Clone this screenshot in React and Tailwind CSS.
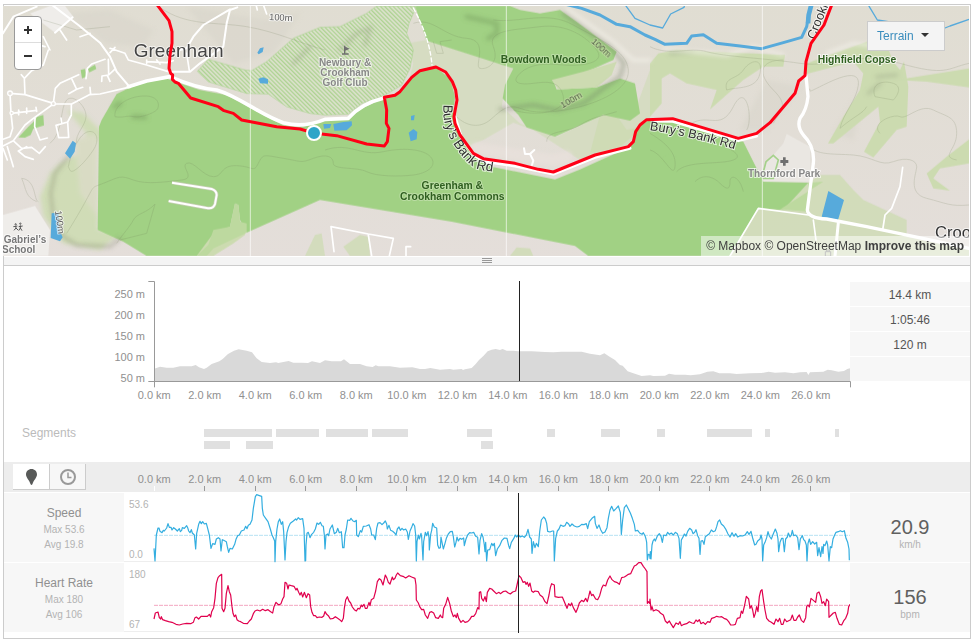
import React from "react";

// Plot samples are grouped by section; each section has its own x origin.
const joinSections = (...sections) =>
  sections
    .map(([origin, text]) =>
      text
        .trim()
        .split(/\s+/)
        .map((pair) => {
          const [x, y] = pair.split(",").map(Number);
          return `${x + origin},${y}`;
        })
        .join(" ")
    )
    .join(" ");

const SPEED = joinSections(
  [0, `462,280 465,318 466,300 469,240 474,219 477,219 480,229 486,233 490,226 493,228 500,219 504,206 508,217 513,217 516,225 521,218 526,222 532,228 538,221 541,230 545,226 547,218 553,220 560,212 563,218 566,228 570,233 574,224 577,234 583,240 587,282 590,235 596,208 600,199 604,206 608,200 613,207 619,205 623,220 628,240 633,280 638,266 645,268 649,252 655,248 660,252 663,288 667,254 671,256 679,260 682,275 686,292 690,280 697,282 704,268 708,253 713,242 718,240 724,228 732,225 737,214 741,221 745,211 750,208 756,195 760,160 766,125 770,119 776,121 785,124 787,160 790,180 797,190 804,200 811,222 816,240 820,248 824,258 825,320 827,260 831,222 835,200 839,192 844,208 848,200 851,230 855,315 858,260 861,233 866,215 871,205 880,198 887,192 890,195 895,188 900,193 908,191 912,220 915,318 917,317 918,270 921,235 925,232 930,248 935,238 941,232 946,222 951,204 956,208 961,202 966,212 970,214 973,240`],
  [975, `0,282 3,240 8,237 11,242 15,222 22,210 28,236 34,232 38,220 43,233 49,230 53,278 57,278 60,240 64,222 68,195 74,196 78,190 84,198 89,200 94,196 95,240 100,245 106,227 110,231 115,214 124,213 132,209 137,222 140,240 146,240 151,254 155,220 159,204 165,203 171,209 176,204 181,198 185,207 187,222 192,211 197,226 203,229 208,233 213,240 217,222 222,216 226,226 231,220 236,225 242,222 247,231 250,253 255,228 260,217 264,206 269,213 272,240 274,318 276,260 280,240 283,252 288,235 290,245 294,315 296,260 301,232 305,242 309,230 312,248 313,285 317,238 320,226 323,205 328,216 335,219 338,270 342,280 346,278 348,246 351,262 355,282 360,265 364,250 370,237 376,230 382,229 385,245 389,276 393,262 396,246 400,258 405,250 410,253 416,249 418,272 423,252 428,240 434,233 440,234 446,232 452,244 458,247 462,297 465,256 470,236 474,246 478,270 480,290 482,262 485,318 488,285 494,284 500,265 504,272 508,265 512,302 517,282 524,272 531,256 538,249 546,250 551,272 554,281 559,262 566,251 571,240 575,246 580,240 586,246 592,243 598,247 604,240 609,223 614,246 619,252 621,295 625,260 630,278 634,265 640,275 644,230 649,195 656,186 661,192 665,205 668,229 675,231 682,228 686,228 688,318 692,250 697,228 702,222 707,210 714,214 720,212 725,202 731,207 735,214 741,207 748,213 756,216 763,214 770,208 777,209 784,206 788,221 793,200 801,190 809,184 811,205 816,220 822,210 827,224 833,235 840,231 846,218 850,190 855,165 860,154 866,168 873,161 880,153 884,166 886,172 889,238 893,195 898,158 904,150 909,160 916,174 922,190 928,208 931,228 938,226 944,234 951,238 955,233 960,242 963,252 965,262 967,315 970,298 974,300`],
  [1950, `0,310 1,290 3,312 6,270 9,258 13,252 16,258 22,243 28,236 33,244 37,262 41,240 48,242 53,232 58,238 64,234 70,240 76,232 82,236 87,250 91,310 94,255 98,248 103,237 108,243 113,229 119,220 125,225 129,236 134,232 138,224 143,242 147,250 150,298 153,258 158,257 162,268 166,245 172,241 178,236 184,225 190,230 196,227 200,215 204,200 209,195 214,207 221,213 228,224 234,237 240,246 246,233 252,244 257,236 263,246 270,242 278,243 286,239 292,230 297,238 303,229 308,249 314,270 318,268 323,258 330,252 333,240 336,252 338,318 341,270 345,262 350,248 354,230 358,243 364,252 370,236 376,222 381,235 384,252 386,290 390,262 395,250 399,250 403,290 407,252 412,246 415,234 420,246 424,240 427,226 431,242 437,240 443,248 447,284 451,252 457,242 461,254 465,258 469,270 471,318 474,265 478,252 482,268 488,260 494,267 500,262 503,302 507,278 512,305 516,275 519,295 521,268 525,272 530,258 533,270 537,318 541,275 545,278 549,252 554,240 558,232 565,230 571,227 577,230 583,227 588,250 593,262 597,282 598,316`]
);

const HEART = joinSections(
  [0, `462,492 466,474 474,471 478,488 482,492 484,485 488,494 496,497 506,500 516,502 528,508 538,510 548,507 560,505 572,506 580,502 585,488 589,486 596,492 603,484 612,484 622,484 628,478 632,486 635,470 641,458 645,430 649,385 654,368 659,362 665,358 666,460 671,470 675,460 679,415 684,392 688,410 692,420 696,455 699,475 703,485 707,480 711,494 716,498 722,500 730,505 742,506 748,498 754,492 760,476 765,468 772,465 780,468 788,463 796,467 804,464 812,470 818,474 822,455 828,442 836,450 843,446 848,432 852,425 855,382 860,385 864,402 867,390 874,392 882,394 888,405 891,400 896,412 900,420 904,412 908,426 913,412 919,428 924,416 929,420 932,455 936,472 941,482 946,482 951,488 958,486 966,487 971,483`],
  [975, `0,470 5,478 10,482 16,492 25,490 31,485 38,490 44,494 50,500 55,490 58,460 62,435 67,425 72,438 77,444 82,456 88,464 94,468 99,460 104,462 109,450 112,455 117,448 121,460 126,460 132,442 135,452 139,434 146,430 152,408 157,380 163,371 168,375 174,390 181,360 186,370 190,382 195,387 202,366 205,374 210,370 214,360 218,354 226,362 234,364 242,369 252,362 260,366 270,370 273,390 274,435 280,444 284,455 290,464 296,463 301,480 308,490 314,472 320,470 326,474 332,488 340,490 346,480 349,486 353,488 356,460 362,448 368,427 374,446 379,468 385,485 390,480 394,488 397,475 401,490 408,502 414,496 420,502 428,500 434,494 440,484 446,484 452,476 458,458 462,462 463,412 467,410 470,430 475,438 480,425 484,440 487,412 494,400 500,402 506,408 514,416 522,412 526,416 534,410 542,408 550,414 556,417 563,411 572,408 576,390 582,362 588,368 594,382 600,380 603,388 607,382 611,394 615,384 620,408 625,412 630,408 640,410 645,420 653,426 660,440 666,446 672,420 676,398 680,386 688,390 690,425 700,427 712,426 718,440 726,460 731,446 736,452 740,444 745,458 753,472 758,460 763,444 770,436 776,440 782,430 787,440 791,425 795,408 800,422 804,418 812,432 818,434 824,422 830,400 835,390 842,393 848,375 855,363 861,374 868,380 875,382 883,388 890,368 898,366 904,362 910,358 917,356 922,345 928,333 934,330 941,323 948,323 955,334 961,342 966,350 967,445 970,440 974,445`],
  [1950, `0,432 3,465 6,455 10,468 18,464 26,468 32,475 40,480 46,498 52,504 58,498 62,505 70,518 78,504 85,508 90,500 94,512 102,508 110,506 118,500 126,504 132,505 138,495 143,500 148,494 153,506 160,502 166,508 173,500 180,502 185,490 192,488 200,484 208,486 215,485 222,490 230,493 236,500 242,510 250,510 256,508 262,490 270,488 274,468 278,475 284,450 289,424 296,432 300,460 304,452 308,465 312,487 316,475 320,455 324,470 328,425 332,408 336,404 341,440 345,465 350,490 357,498 364,502 372,508 378,492 384,500 389,490 394,508 399,508 404,492 410,500 416,497 422,494 427,480 432,496 438,496 443,486 448,480 454,496 461,502 467,488 470,455 474,450 478,456 483,430 490,436 497,442 501,415 507,411 512,425 516,445 521,440 526,452 530,432 536,440 537,487 544,480 550,474 556,472 561,490 568,508 575,510 582,496 587,490 593,475 596,455 600,448`]
);

const ELEVATION = joinSections(
  [0, `463,356 480,350 500,353 520,353 540,349 575,349 587,345 597,352 612,357 620,353 635,342 658,334 668,327 684,312 702,302 716,298 740,302 756,307 770,325 785,336 810,339 828,337 835,339 850,336 866,333 880,338 905,338 924,339 936,334 960,339`],
  [975, `0,331 20,334 48,334 57,328 75,342 105,342 125,349 143,351 152,346 160,349 195,349 225,353 262,352 285,357 300,357 316,354 345,359 375,357 385,359 410,357 414,360 420,358 440,354 452,342 462,330 475,318 488,304 500,299 512,297 525,300 533,297 545,302 565,302 580,304 620,304 660,306 685,307 710,305 770,305 795,311 825,316 838,310 855,321 870,330 885,345 893,347 908,364 925,370 950,378`],
  [1950, `0,376 10,378 45,377 57,371 75,374 105,374 122,376 150,373 172,365 190,364 208,370 240,370 260,372 300,370 335,369 356,365 375,368 405,367 430,370 450,367 470,366 475,375 480,367 520,365 533,359 545,361 565,365 582,363 592,357 600,355`]
);

const SEGMENTS = [
  [204, 68, 0], [276, 43, 0], [326, 42, 0], [372, 36, 0], [467, 25, 0], [547, 8, 0],
  [601, 19, 0], [657, 8, 0], [707, 45, 0], [765, 5, 0], [835, 4, 0],
  [204, 26, 12], [246, 27, 12], [481, 12, 12],
];

const KM = [0, 2, 4, 6, 8, 10, 12, 14, 16, 18, 20, 22, 24, 26];

function Label({ x, y, size = 30, fill = "#888", halo = "#ffffffaa", bold = true, children, ...rest }) {
  return (
    <text x={x} y={y} fontSize={size} fill={fill} fontWeight={bold ? 700 : 400} stroke={halo} strokeWidth="6" strokeLinejoin="round" paintOrder="stroke" textAnchor="middle" {...rest}>
      {children}
    </text>
  );
}

const ROUTE =
  "M468,10 L507,62 L516,95 L516,130 L510,165 L507,205 L512,220 L518,225 L517,238 L525,246 L535,250 L572,294 L655,320 L672,332 L700,340 L725,360 L830,380 L900,387 L945,400 L1010,407 L1100,432 L1153,438 L1162,425 L1167,385 L1159,370 L1160,330 L1153,292 L1185,286 L1200,275 L1235,232 L1260,212 L1308,201 L1337,216 L1357,245 L1367,270 L1371,300 L1362,350 L1365,370 L1380,405 L1420,460 L1450,476 L1545,490 L1615,508 L1660,516 L1785,465 L1885,440 L1900,425 L1907,395 L1920,375 L1940,359 L2018,356 L2215,415 L2270,400 L2310,368 L2385,280 L2396,243 L2415,227 L2418,185 L2433,130 L2472,75 L2497,10";

const TOWN_ROADS =
  "M9,438 L40,422 L75,375 L100,355 L160,312 L215,312 L268,284 L300,282 L385,262 M30,280 L75,284 L160,310 M30,280 L33,340 L38,385 L30,410 L9,418 M75,284 L73,235 L95,212 L130,195 L145,150 M73,235 L64,224 M160,310 L166,265 L180,250 L236,224 M216,238 L230,268 L206,281 M230,268 L248,262 M258,236 L262,205 L275,192 L315,178 M325,178 L326,225 L344,208 M326,225 L306,228 L305,244 M322,226 L330,244 M272,284 L270,262 M105,355 L104,380 L120,420 L142,414 M214,312 L214,345 L203,366 L206,412 L176,413 L168,376 L203,366 M185,370 L183,354 M35,340 L110,331 M56,330 L56,344 M80,324 L80,340 M108,322 L110,334 M42,424 L65,445 L95,442 L118,460 L136,440 M80,440 L55,453 L75,470 L100,478 M9,445 L22,480 M22,440 L40,500";

function TerrainMap() {
  return (
    <svg className="block h-full w-full" viewBox="9 18 2898 750" preserveAspectRatio="xMidYMid slice" fontFamily="'Liberation Sans', Arial, sans-serif" role="img" aria-label="Route map of Greenham and Crookham Commons">
      <defs>
        <linearGradient id="land" x1="0" y1="0" x2="0" y2="1">
          <stop offset="0" stopColor="#e0ddd2" />
          <stop offset="1" stopColor="#e4deda" />
        </linearGradient>
        <pattern id="hatch" width="9" height="9" patternUnits="userSpaceOnUse" patternTransform="rotate(-45)">
          <rect width="9" height="9" fill="#dbe1cb" />
          <rect width="3" height="9" fill="#a3d085" />
        </pattern>
        <filter id="shade" x="-30%" y="-30%" width="160%" height="160%">
          <feGaussianBlur stdDeviation="7" />
        </filter>
        <path id="bury-west" d="M1331,314 C1326,368 1343,413 1383,464 S1438,507 1495,518" />
        <path id="bury-east" d="M1949,390 Q2060,405 2225,454" />
        <path id="crook" d="M2444,120 L2512,-50" />
      </defs>
      <rect x="0" y="0" width="2925" height="790" fill="url(#land)" />

      {/* built-up areas and soft relief */}
      <g filter="url(#shade)">
        <path fill="#d8d3ca" opacity=".5" d="M200,40 L330,30 L460,90 L430,140 L320,130 Z M560,20 L800,60 L900,40 L820,160 L700,190 Z M2300,240 L2400,260 L2300,390 L2220,390 Z M2600,240 L2500,400 L2560,420 Z" />
        <path fill="#cddcb3" opacity=".9" d="M180,490 L150,520 L120,590 L130,650 L190,730 L300,750 L360,700 L293,690 L290,430 L310,400 L250,340 L200,330 L260,400 L240,460 Z" />
        <path fill="#d9dbc4" d="M225,420 L290,400 L293,650 L240,580 Z" />
      </g>
      <path fill="#efedea" d="M90,40 L150,18 L195,18 L220,50 L165,98 Z M9,645 L105,618 L150,690 L145,768 L9,768 Z" />
      <path fill="#eae7e2" d="M2290,500 L2350,430 L2360,402 L2430,440 L2432,545 L2290,547 Z" />

      {/* pale woodland */}
      <g fill="#d6dcc2">
        <path d="M1220,130 L1280,120 L1540,205 L1515,260 L1505,320 L1560,370 L1670,410 L1810,345 L1900,345 L1950,210 L1950,358 L1905,390 L1890,435 L1740,480 L1600,390 L1540,368 L1450,420 L1400,440 L1368,380 L1371,300 L1340,220 L1308,200 L1260,212 L1225,250 L1240,190 Z" />
      </g>
      <g fill="#ccdbb0">
        <path d="M1950,190 L1975,160 L2030,148 L2130,155 L2260,160 L2355,165 L2350,200 L2290,200 L2230,240 L2130,328 L2150,270 L2060,250 L2010,220 L1985,235 L1985,310 L1950,350 Z" />
        <path d="M2420,190 L2500,160 L2600,125 L2660,135 L2680,185 L2700,210 L2712,185 L2725,260 L2720,380 L2690,390 L2620,472 L2592,455 L2640,365 L2635,320 L2500,430 L2484,430 L2530,350 L2580,270 L2590,220 L2560,185 L2420,222 Z" />
        <path d="M2690,240 L2907,205 L2907,262 L2780,245 Z M2907,418 L2840,470 L2780,520 L2800,565 L2850,572 L2800,535 L2820,505 L2907,490 Z" />
        <path d="M2425,548 L2460,525 L2520,525 L2560,570 L2590,600 L2720,660 L2720,710 L2907,750 L2907,768 L2160,768 L2280,625 L2340,625 Z" opacity=".75" />
        <path d="M1050,768 L1030,740 L1080,705 L1105,710 L1110,768 Z M1530,768 L1550,742 L1590,745 L1600,768 Z M1800,345 L1845,340 L1880,390 L1930,380 L1860,440 L1770,460 Z" opacity=".75" />
        <path d="M915,768 L945,705 L965,700 L975,768 Z" opacity=".7" />
        <path d="M560,768 L640,685 L690,680 L705,610 L715,615 L720,665 L740,670 L735,705 L700,730 L640,768 Z" />
      </g>

      {/* commons and woods */}
      <g fill="#a1d184">
        <path d="M500,235 L440,245 L390,262 L350,282 L305,360 L297,380 L293,690 L370,725 L440,768 L590,768 L640,700 L690,680 L705,610 L715,615 L720,660 L740,698 L960,600 L1355,665 L1725,738 L1765,768 L2190,768 L2275,625 L2350,630 L2425,548 L2290,545 L2230,425 L2215,420 L2020,360 L1950,358 L1915,380 L1890,440 L1740,508 L1665,538 L1475,500 L1425,470 L1385,420 L1360,350 L1365,290 L1350,235 L1305,200 L1250,215 L1200,280 L1155,292 L1085,325 L1045,355 L960,362 L910,380 L850,375 L800,350 L680,285 L600,270 Z" />
        <path d="M1245,18 L1530,18 L1560,30 L1620,40 L1680,30 L1730,65 L1850,155 L1840,180 L1760,215 L1660,242 L1670,268 L1790,262 L1860,235 L1905,250 L1920,340 L1890,362 L1810,345 L1665,410 L1580,382 L1555,345 L1508,295 L1515,255 L1540,205 L1280,122 Z" />
        <path d="M242,210 L255,207 L258,230 L246,235 Z M264,206 L285,194 L289,207 L268,217 Z M55,412 L85,380 L98,368 L112,350 L130,345 L132,376 L100,386 L92,405 L75,413 Z M1980,480 L2005,462 L2030,470 L1998,488 Z" />
      </g>
      <path fill="#bdd99f" d="M590,768 L625,735 L640,690 L690,680 L705,610 L715,615 L720,665 L740,670 L740,698 L640,745 L620,768 Z M2340,628 L2470,545 L2425,548 L2425,635 Z" />
      <path fill="#cddbb1" d="M1655,240 L1750,215 L1850,185 L1835,225 L1790,262 L1675,268 Z" />
      <path fill="url(#hatch)" stroke="#acd392" strokeWidth="2" d="M592,214 L625,178 L735,210 L755,212 L800,185 L880,115 L960,82 L1020,80 L1100,40 L1130,18 L1250,18 L1227,70 L1220,100 L1240,150 L1230,205 L1205,255 L1155,285 L1085,310 L1045,342 L975,345 L930,340 L860,320 L805,282 L740,280 L625,245 Z" />

      {/* hill shading */}
      <g filter="url(#shade)" fill="none" strokeLinecap="round">
        <path stroke="#6f7a62" strokeWidth="11" opacity=".4" d="M1690,40 L1750,85 L1830,140 L1872,190 L1860,230 L1810,265 L1750,310 L1670,330 L1600,315 L1500,328" />
        <path stroke="#7a7f66" strokeWidth="10" opacity=".35" d="M205,470 L165,520 L152,580 L160,650 L190,710 L230,735 L330,740 L360,715" />
        <path stroke="#7fa765" strokeWidth="14" opacity=".6" d="M1400,50 L1490,70 L1490,100 L1465,115 M345,320 L360,310 M400,350 L435,352" />
        <path stroke="#9aa586" strokeWidth="10" opacity=".45" d="M1020,150 L1070,100 L1110,85 L1095,135 M880,190 L930,140 M2010,160 L2080,155 M2630,230 L2690,225 M2605,280 L2640,250" />
        <path stroke="#f4f1ea" strokeWidth="9" opacity=".8" d="M1700,25 L1840,125 L1900,180 L1950,180 M1990,145 L2180,165 L2260,140 L2350,165 M2480,160 L2560,130 L2650,140" />
        <path stroke="#e8e0da" strokeWidth="34" opacity=".9" d="M1430,445 L1560,465 L1660,480 L1700,470" />
      </g>

      {/* contours */}
      <g fill="none" stroke="#6e7a58" strokeWidth="2" opacity=".27">
        <path d="M480,22 C560,80 650,65 740,80 S900,130 975,150" />
        <path d="M130,60 L230,90 L330,80" />
        <path d="M345,350 C340,320 380,290 430,288 S480,320 470,330 S420,355 400,350 S370,355 345,350 Z" />
        <path d="M200,700 C300,540 260,570 310,550 S360,525 400,540 S500,545 545,540 S540,500 560,490 S610,530 640,530 S660,495 710,497 S760,520 775,490 S790,465 850,475 S900,490 940,475 S1000,470 1000,490 S1070,500 1100,515 S1200,530 1240,525 S1310,500 1295,475 S1220,440 1150,455 S1050,425 975,450" />
        <path d="M465,612 L440,700 L360,720 M465,612 C440,640 410,640 400,660 S370,700 350,730 M65,535 C110,540 100,600 115,605 M65,535 C80,570 75,590 110,605" />
        <path d="M205,500 C215,450 240,400 265,395 S300,420 280,450 S240,500 225,510 S210,510 205,500 Z M150,430 C190,400 180,320 200,300 S260,320 258,350 S225,400 230,430" />
        <path d="M1240,70 C1300,50 1330,110 1400,115 S1420,200 1440,205 S1500,190 1480,140 S1540,90 1620,80 S1760,110 1790,150 S1740,200 1690,195 S1590,190 1560,220 S1560,255 1600,250 S1680,240 1690,290 S1600,350 1540,330" />
        <path d="M1480,60 C1560,70 1640,30 1720,75 S1880,150 1885,210 S1790,310 1720,325 S1600,340 1560,325 S1500,335 1470,360 S1400,380 1370,350" />
        <path d="M1640,425 C1640,390 1700,400 1740,375 S1800,350 1850,335 M1300,125 L1310,160 L1330,160 L1320,125 L1355,120" />
        <path d="M1950,140 C2010,170 2070,140 2120,155 S2300,175 2400,190 S2560,150 2700,190 S2840,205 2907,190 M2180,270 C2170,230 2210,240 2230,210 S2290,170 2280,220 S2210,260 2180,270 Z" />
        <path d="M2060,380 C2120,330 2160,400 2200,320 S2260,360 2240,390 M2350,180 C2280,180 2270,220 2320,270 S2340,330 2320,370" />
        <path d="M2520,385 C2530,340 2570,300 2575,255 S2530,225 2470,255 S2440,270 2425,265 M2520,385 C2560,350 2590,340 2600,320" />
        <path d="M2640,400 C2610,370 2680,340 2700,350 S2760,310 2800,330 S2870,350 2870,400 S2820,470 2870,480 M2625,290 C2610,250 2650,240 2680,250 S2690,290 2680,300 Z" />
        <path d="M2420,420 C2430,470 2500,460 2560,465 S2640,500 2680,485 S2750,480 2750,500 S2720,580 2780,595 S2850,620 2907,615" />
        <path d="M1950,400 C2000,430 2030,460 2025,500 S1990,460 1950,450 M2030,515 C2060,480 2160,495 2200,480 S2170,440 2160,430 M2085,545 C2110,520 2140,530 2160,550 S2190,570 2190,545 S2220,530 2230,575" />
      </g>

      {/* water */}
      <g fill="#57aadb">
        <path d="M195,460 L218,422 L228,430 L224,455 L210,476 Z M155,640 L175,638 L178,690 L188,712 L180,724 L152,714 Z M772,158 L780,145 L791,142 L788,156 L776,163 Z M775,236 L790,232 L804,238 L804,251 L780,250 Z M1000,372 L1030,366 L1055,364 L1056,376 L1040,391 L1003,392 Z M970,372 L994,372 L990,384 L972,386 Z M1233,348 L1244,345 L1242,361 L1233,361 Z M1226,398 L1240,387 L1252,396 L1250,418 L1232,424 Z M2485,573 L2532,600 L2514,660 L2465,650 Z" />
      </g>
      <g fill="none" stroke="#57aadb" strokeLinejoin="round">
        <path strokeWidth="9" d="M1700,14 L1745,25 L1800,45 L1850,73 L1890,80 L1935,105 L1965,118 L1995,133 L2060,130 L2075,108 L2110,104 L2150,130 L2220,138 L2285,146 L2350,128 L2405,112 L2420,80 L2425,50" />
        <path strokeWidth="14" d="M2424,70 L2426,45 L2435,10" />
        <path strokeWidth="4" d="M1875,14 L1905,55 L1950,75 L1988,84 L2012,42 L2052,22 L2055,10 M2602,10 L2632,60 L2820,90 L2850,78 L2907,58" />
      </g>

      {/* minor roads */}
      <g fill="none" stroke="#fff" strokeWidth="6" strokeLinejoin="round" strokeLinecap="round">
        <path d="M155,14 L235,75 L300,128 L330,170 L350,215 L390,262 M218,52 L165,98 M9,100 L40,50 L110,20" />
        <path d="M510,215 L570,215 L600,190 L670,140 L680,70 L690,30 L712,22 M690,28 L610,75 L580,110 L560,145 L540,150" />
        <path d="M330,145 L375,160 L385,180 L440,195 L505,215 M330,158 L345,142 M560,160 L568,212 M470,180 L480,192 M440,180 L440,190 M440,185 L500,188 L520,182" strokeWidth="5" />
        <path d={TOWN_ROADS} strokeWidth="5" />
        <path d="M100,130 L135,140 M180,90 L200,120 M130,110 L150,150 M240,110 L270,100 M768,14 L772,30 M790,14 L800,42" strokeWidth="5" />
        <path d="M1002,755 L993,680 L1105,702 L1180,715 L1168,768 M1105,705 L1115,768 M1218,768 L1218,740 L1232,740" strokeWidth="5" />
        <path d="M1596,495 L1600,482 L1590,462 L1575,462 L1572,445 M1590,462 L1603,450" />
        <path d="M2190,768 L2275,625 L2425,645 M2440,660 L2448,720 M2708,502 L2700,560 L2675,625 L2655,645 L2648,690" strokeWidth="5" />
        <path d="M2515,668 L2505,768" strokeWidth="9" />
        <path d="M1240,24 C1270,80 1290,130 1296,195" strokeWidth="4" strokeDasharray="12 8" />
      </g>
      <g fill="none" strokeLinejoin="round">
        <path stroke="#c6cdb4" strokeWidth="10" d="M516,548 L635,567 Q650,572 650,585 L645,612 Q640,628 620,624 L506,603" />
        <path stroke="#fff" strokeWidth="6" d="M516,548 L635,567 Q650,572 650,585 L645,612 Q640,628 620,624 L506,603" />
      </g>

      {/* main roads */}
      <g fill="none" stroke="#fff" strokeLinecap="round" strokeLinejoin="round">
        <path strokeWidth="11" d="M385,260 L440,243 L510,230 Q590,265 650,270 C720,290 780,345 850,368 Q910,385 975,358 L1045,355 Q1085,310 1150,295" />
        <path strokeWidth="9" d="M1365,350 L1385,415 L1422,465 L1450,484 L1545,498 L1660,522 L1785,472 L1890,445 M1960,363 L2018,364 L2215,422 L2270,408" />
        <path strokeWidth="10" d="M2418,228 L2424,290 Q2420,330 2400,355 Q2390,380 2410,405 Q2445,440 2440,490 L2422,630 Q2425,655 2480,657 L2600,680 L2800,722 L2907,745" />
      </g>
      <g fill="#e5e1db" stroke="#fff" strokeWidth="4">
        <circle cx="30" cy="280" r="7" /><circle cx="160" cy="311" r="6" /><circle cx="35" cy="339" r="5" />
      </g>
      <path stroke="#a5d18b" strokeWidth="5" fill="none" d="M2285,535 L2298,485 L2320,466 L2335,480 L2320,535 Z" />

      {/* tile seams */}
      <path stroke="#fff" strokeWidth="3" opacity=".65" d="M751,18 V768 M1519,18 V768 M2287,18 V768" />

      {/* labels below the route */}
      <Label x="536" y="170" size="57" fill="#444" bold={false}>Greenham</Label>
      <Label x="842" y="62" size="28" fill="#5c5c5c" bold={false} transform="rotate(3 842 62)">100m</Label>
      <Label x="1798" y="150" size="28" fill="#56654a" bold={false} halo="#c9dbaa99" transform="rotate(42 1798 150)">100m</Label>
      <Label x="1718" y="308" size="28" fill="#56654a" bold={false} halo="#c9dbaa99" transform="rotate(-30 1718 308)">100m</Label>
      <Label x="170" y="668" size="28" fill="#5c5c5c" bold={false} transform="rotate(82 170 668)">100m</Label>
      {[
        ["#bury-west", "Bury’s Bank Rd", 40],
        ["#bury-east", "Bury’s Bank Rd", 38],
        ["#crook", "Crookham", 38],
      ].map(([href, text, size]) => (
        <text key={href} fontSize={size} fill="#2f2f2f" stroke="#ffffffb0" strokeWidth="6" paintOrder="stroke">
          <textPath href={href}>{text}</textPath>
        </text>
      ))}

      <path d={ROUTE} fill="none" stroke="#ff0016" strokeWidth="9" strokeLinejoin="round" />
      <circle cx="942" cy="399" r="21" fill="#2ea5c8" stroke="#fff" strokeWidth="6" />

      <Label x="1035" y="197">Newbury &amp;</Label>
      <Label x="1035" y="228">Crookham</Label>
      <Label x="1035" y="258">Golf Club</Label>
      <g fill="#6f6f6f">
        <path d="M1032,137 h4 v26 h-4 Z M1036,140 l13,6 l-13,6 Z M1026,160 h20 v4 h-20 Z" />
        <path d="M2349,472 h8 v8 h8 v9 h-8 v8 h-8 v-8 h-8 v-9 h8 Z" />
      </g>
      <g fill="none" stroke="#555" strokeWidth="3">
        <circle cx="47" cy="673" r="2" /><circle cx="61" cy="671" r="2" />
        <path d="M40,680 L52,678 M47,678 L48,684 L42,691 M48,684 L54,690 M56,680 L68,678 M61,676 L61,684 L56,692 M61,684 L66,692" />
        <path stroke="#888" d="M2476,755 h16 v14 h-16 Z M2480,755 v-5 h8 v5" />
      </g>
      <Label x="75" y="729" fill="#777">Gabriel’s</Label>
      <Label x="56" y="759" fill="#777">School</Label>
      <Label x="1631" y="188" size="31" fill="#2f5f20" halo="#c9e3b6aa">Bowdown Woods</Label>
      <Label x="1357" y="567" size="31" fill="#2f5f20" halo="#c9e3b6aa">Greenham &amp;</Label>
      <Label x="1357" y="600" size="31" fill="#2f5f20" halo="#c9e3b6aa">Crookham Commons</Label>
      <Label x="2571" y="190" size="31" fill="#2f5f20">Highfield Copse</Label>
      <Label x="2352" y="532">Thornford Park</Label>
      <Label x="2805" y="714" size="50" fill="#333" bold={false} textAnchor="start">Crookham</Label>
    </svg>
  );
}

function KmScale({ ticks = false }) {
  return (
    <div className="mr-[134px] ml-[5px] grid flex-1 grid-cols-14 text-[11px] leading-[14px] text-[#909090]">
      {KM.map((km) => (
        <div key={km} className="flex flex-col items-center whitespace-nowrap">
          <span>{km}.0 km</span>
          {ticks && <span className={km === 0 ? "h-[5px] w-px bg-white" : "h-[5px] w-px bg-[#999]"} />}
        </div>
      ))}
    </div>
  );
}

function Stream({ name, max, avg, top, bottom, points, color, originY, averageY, value, unit }) {
  return (
    <section className="grid h-[69px] grid-cols-[120px_30px_1fr_120px]">
      <div className="bg-[#f7f7f7] pt-[11px] text-center text-[10px] leading-[15px] text-[#b3b3b3]">
        <h2 className="text-xs leading-[18px] text-[#909090]">{name}</h2>
        <p>Max {max}</p>
        <p>Avg {avg}</p>
      </div>
      <div className="flex flex-col justify-between border-b border-[#eee] pt-[6px] pl-[5px] text-[10px] leading-[12px] text-[#b3b3b3]">
        <span>{top}</span>
        <span>{bottom}</span>
      </div>
      <div className="min-w-0 border-b border-[#eee]">
        <svg className="block h-[68px] w-full overflow-visible" viewBox={`462 ${originY} 2088 204`} preserveAspectRatio="none" role="img" aria-label={`${name} chart`}>
          <line x1="462" x2="2550" y1={averageY} y2={averageY} stroke={color} strokeOpacity=".35" strokeDasharray="4 1" vectorEffect="non-scaling-stroke" />
          <polyline points={points} fill="none" stroke={color} strokeWidth="1.2" strokeLinejoin="round" vectorEffect="non-scaling-stroke" />
          <line x1="1555.5" x2="1555.5" y1={originY} y2={originY + 210} stroke="#222" vectorEffect="non-scaling-stroke" />
        </svg>
      </div>
      <div className="bg-[#f7f7f7] pt-[22px] text-center text-[10px] leading-[12px] text-[#b3b3b3]">
        <p className="text-xl leading-6 text-[#606060]">{value}</p>
        <p>{unit}</p>
      </div>
    </section>
  );
}

export default function App() {
  return (
    <div className="min-h-screen bg-white pt-1 pr-1 pl-[3px] font-['Liberation_Sans',Arial,sans-serif]">
      <main className="border border-[#ccc] pt-px pb-[6px]">
        <div className="relative mr-px -ml-px h-[250px] overflow-hidden">
          <TerrainMap />
          <div className="absolute top-[10px] left-[11px] flex w-7 flex-col rounded border border-[#999] bg-white">
            <button type="button" aria-label="Zoom in" className="flex h-[26px] items-center justify-center border-b border-[#ddd]">
              <svg className="size-[8px]" viewBox="0 0 8 8" stroke="#333" strokeWidth="2"><path d="M0,4 H8 M4,0 V8" /></svg>
            </button>
            <button type="button" aria-label="Zoom out" className="flex h-[26px] items-center justify-center">
              <svg className="size-[8px]" viewBox="0 0 8 8" stroke="#333" strokeWidth="2"><path d="M0,4 H8" /></svg>
            </button>
          </div>
          <div className="absolute top-[15px] right-6 h-[30px] w-[78px]">
            <select aria-label="Map style" className="h-full w-full appearance-none border border-[#ccc] bg-[#f4f4f4] pl-[9px] text-xs text-[#3b8dbd]">
              <option>Terrain</option>
            </select>
            <svg className="pointer-events-none absolute top-[12px] right-[16px] h-[4px] w-[8px]" viewBox="0 0 8 4"><path d="M0,0 H8 L4,4 Z" fill="#333" /></svg>
          </div>
          <p className="absolute right-0 bottom-0 bg-white/50 px-[5px] text-xs leading-5 text-[#404040]">
            <a href="#mapbox">© Mapbox</a> <a href="#osm">© OpenStreetMap</a> <a href="#improve" className="font-bold">Improve this map</a>
          </p>
        </div>

        <div className="mt-px flex h-[9px] flex-col items-center gap-px border-b border-[#ccc] bg-[#f4f4f4] pt-px">
          <span className="h-px w-[10px] bg-[#999]" />
          <span className="h-px w-[10px] bg-[#999]" />
          <span className="h-px w-[10px] bg-[#999]" />
        </div>

        <section className="mt-[15px] grid h-[107px] grid-cols-[150px_1fr_120px]">
          <div className="pt-[3px] pr-[9px] text-right text-[11px] leading-[21px] text-[#909090]">
            {[250, 200, 150, 100, 50].map((m) => (
              <p key={m}>{m} m</p>
            ))}
          </div>
          <svg className="block h-[107px] w-full overflow-visible" viewBox="462 93 2088 321" preserveAspectRatio="none" role="img" aria-label="Elevation chart">
            <polygon points={`462,394 462,356 ${ELEVATION} 2550,394`} fill="#d9d9d9" />
            <path d="M445,94.5 H463.5 V412 M445,394.5 H2551.5 V412" fill="none" stroke="#999" vectorEffect="non-scaling-stroke" />
            <line x1="1558.5" x2="1558.5" y1="93" y2="393" stroke="#222" vectorEffect="non-scaling-stroke" />
          </svg>
          <div className="mt-px flex flex-col gap-px text-center text-xs leading-[26px] text-[#555]">
            <p className="h-6 bg-[#f7f7f7]">14.4 km</p>
            <p className="h-6 bg-[#f7f7f7]">1:05:46</p>
            <p className="h-6 bg-[#f7f7f7]">120 m</p>
            <p className="h-6 bg-[#f7f7f7]" />
          </div>
        </section>
        <div className="flex pl-[120px]">
          <KmScale />
        </div>

        <section className="mt-[22px] grid h-[38px] grid-cols-[150px_1fr_120px]">
          <h2 className="pl-[18px] text-xs leading-[18px] text-[#bbb]">Segments</h2>
          <svg className="mt-[5px] block h-5 w-full" viewBox="154 0 696 20" preserveAspectRatio="none" role="img" aria-label="Segments">
            {SEGMENTS.map(([x, w, y]) => (
              <rect key={`${x}-${y}`} x={x} y={y} width={w} height="8" fill="#e0e0e0" />
            ))}
          </svg>
        </section>

        <div className="flex h-[30px] bg-[#ededed]">
          <div className="flex w-[120px] items-start pt-[2px] pl-[9px]">
            <button type="button" aria-label="By distance" className="flex h-[26px] w-[37px] items-center justify-center border-r border-b border-[#ccc] bg-white">
              <svg className="h-4 w-[11px]" viewBox="0 0 11 16"><path d="M5.5,0 C2.4,0 0,2.4 0,5.4 C0,8.6 3.6,11.4 4.6,15.2 Q5.5,16.6 6.4,15.2 C7.4,11.4 11,8.6 11,5.4 C11,2.4 8.6,0 5.5,0 Z" fill="#585a59" /></svg>
            </button>
            <button type="button" aria-label="By time" className="flex h-[26px] w-9 items-center justify-center border-r border-b border-[#ccc] bg-[#f7f7f7]">
              <svg className="size-4" viewBox="0 0 16 16" fill="none" stroke="#999"><circle cx="8" cy="8" r="7" strokeWidth="2" /><path d="M8,3.5 V8.5 H11.5" strokeWidth="1.5" /></svg>
            </button>
          </div>
          <div className="flex flex-1 pt-[10px]">
            <KmScale ticks />
          </div>
        </div>

        <div className="mt-px flex flex-col gap-px">
          <Stream name="Speed" max="53.6" avg="19.8" top="53.6" bottom="0.0" points={SPEED} color="#33aee0" originY={114} averageY={241} value="20.9" unit="km/h" />
          <Stream name="Heart Rate" max="180" avg="106" top="180" bottom="67" points={HEART} color="#e0004d" originY={324} averageY={451} value="156" unit="bpm" />
        </div>
      </main>
    </div>
  );
}
